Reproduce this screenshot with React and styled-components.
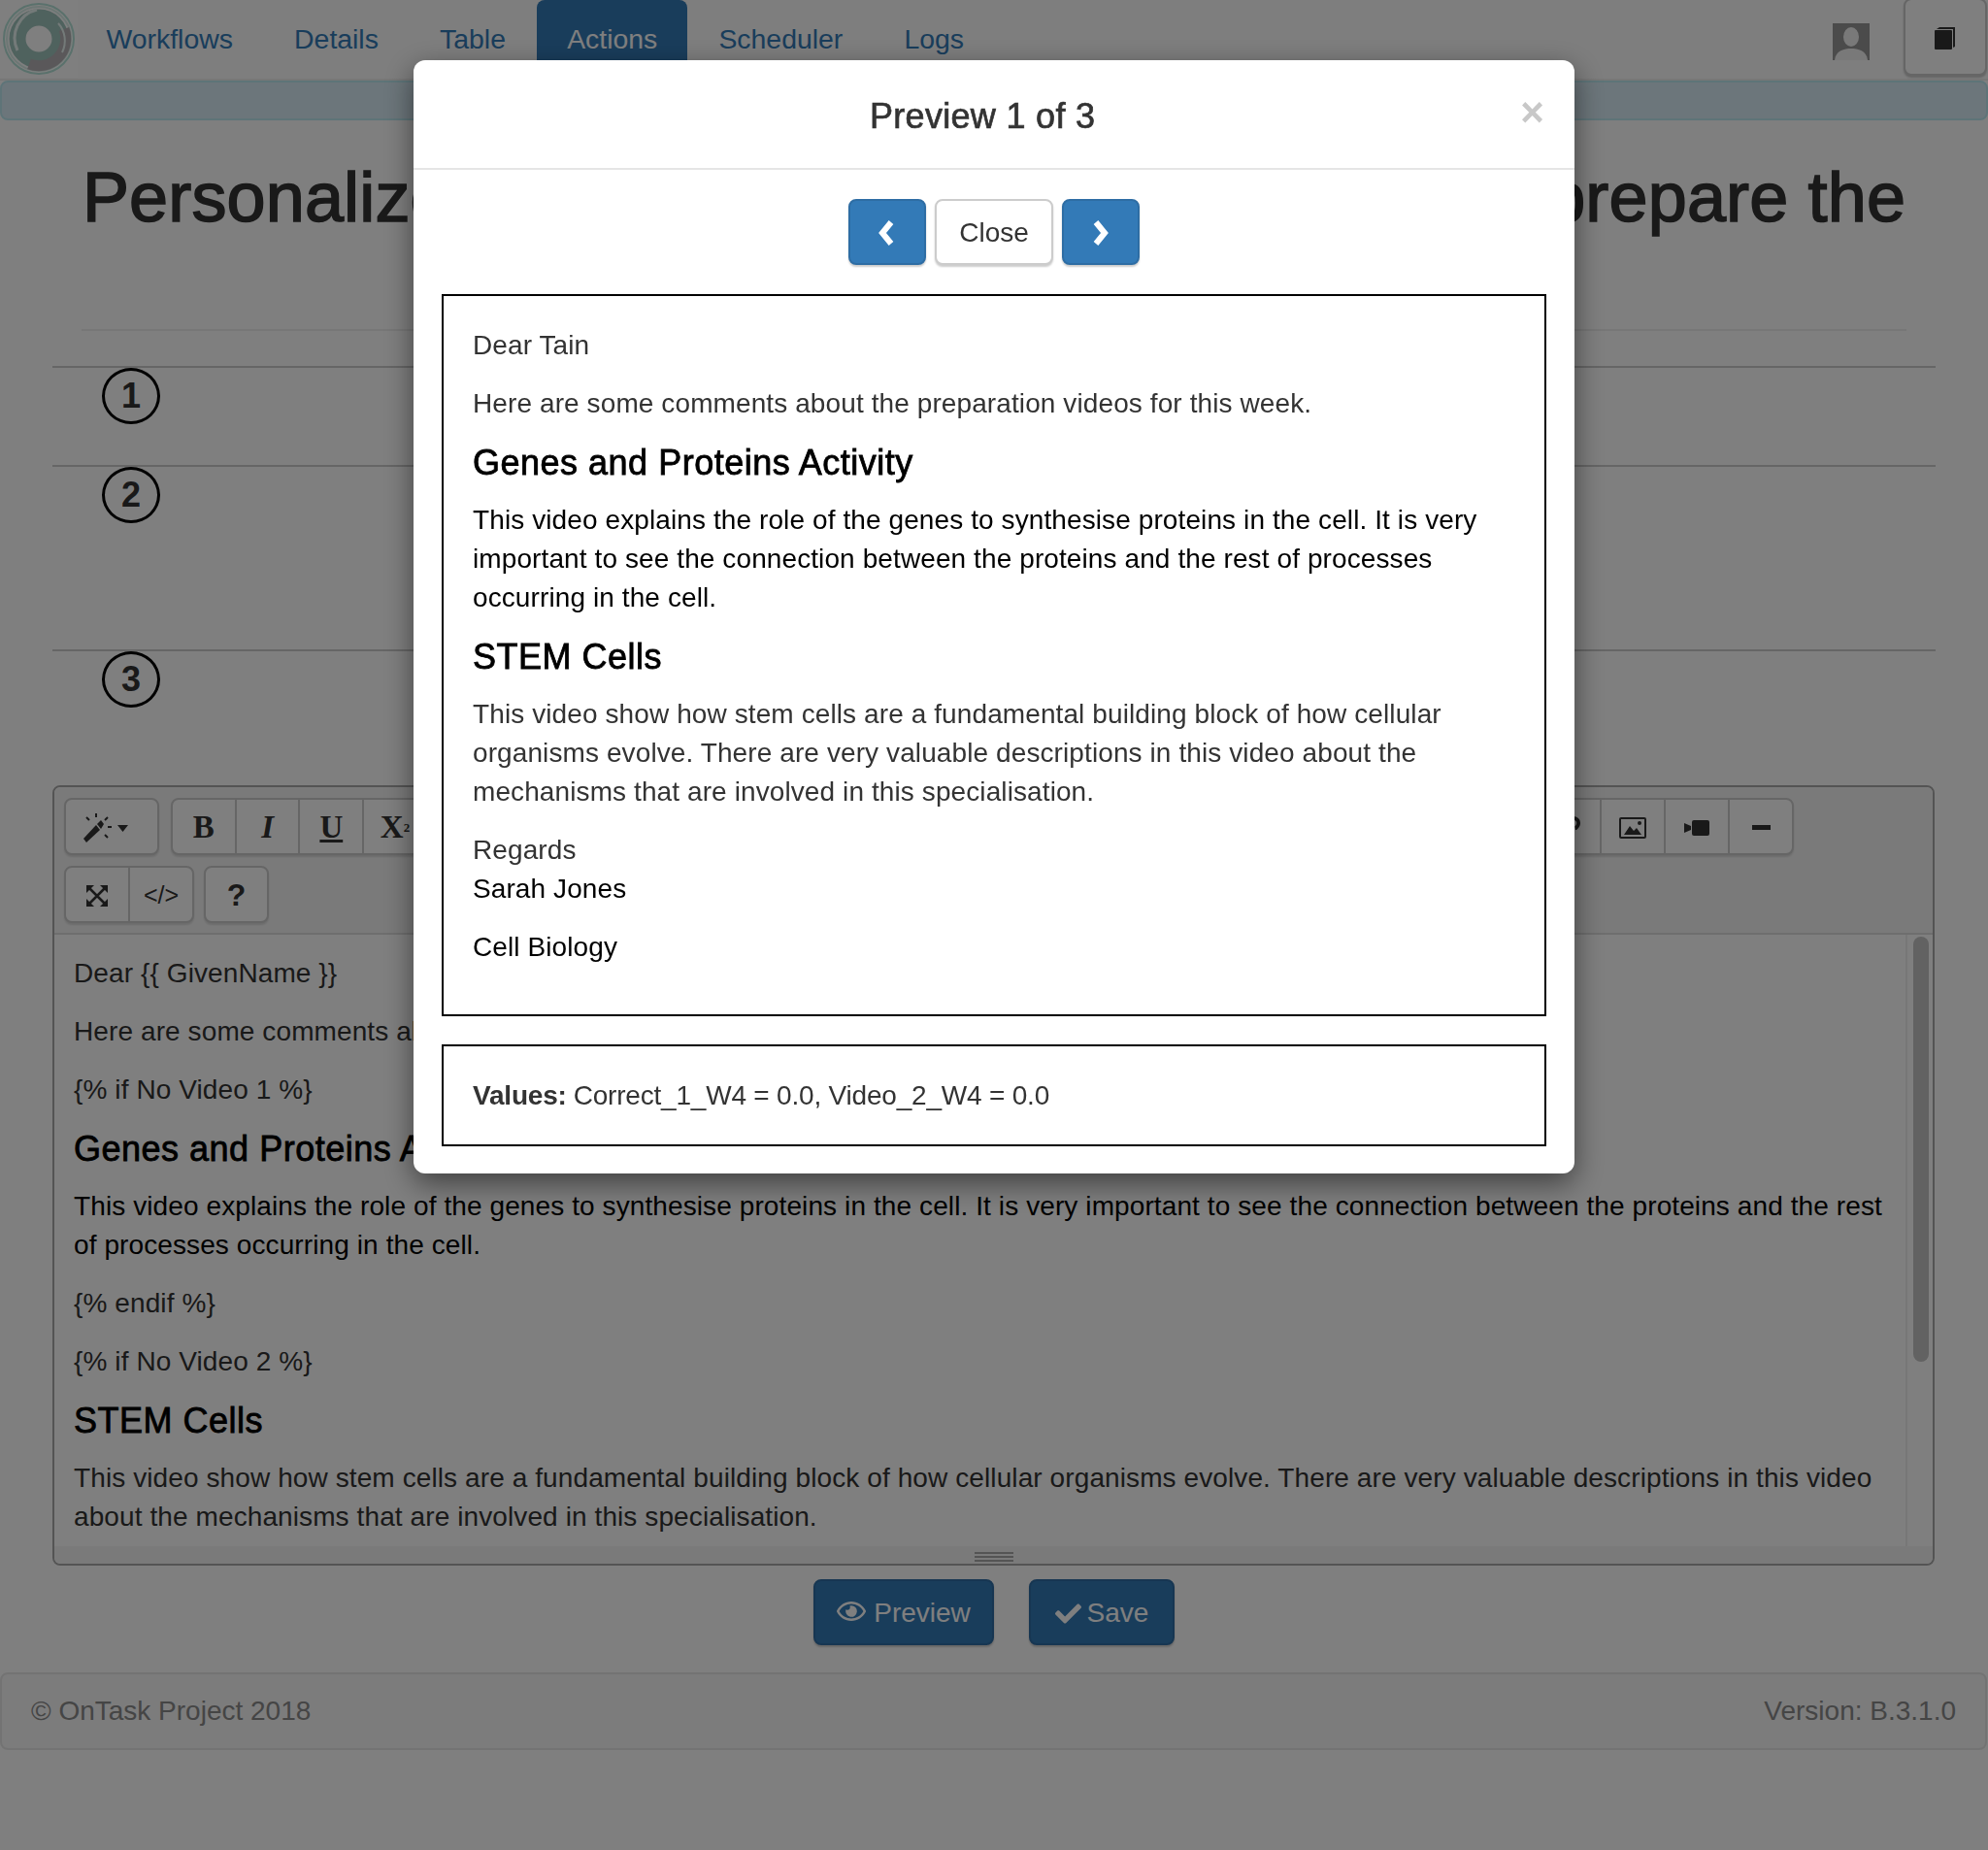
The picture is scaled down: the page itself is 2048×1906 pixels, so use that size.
import React from 'react'
import styled, { createGlobalStyle } from 'styled-components'
import { FaCheck, FaRegEye, FaLink } from 'react-icons/fa'

const GlobalStyle = createGlobalStyle`
  html, body {
    margin: 0;
    padding: 0;
    background: #fff;
    color: #333;
    font-family: "Liberation Sans", Arial, sans-serif;
    font-size: 28px;
    line-height: 40px;
    letter-spacing: 0.1px;
  }
  * {
    box-sizing: border-box;
  }
`

const NavBar = styled.nav`
  display: flex;
  align-items: flex-start;
  height: 83px;
  background: #fcfcfc;
  border-bottom: 2px solid #eee;
`

const LogoBox = styled.div`
  width: 80px;
  height: 80px;
  flex: none;
  background: #fff;
`

const NavLinks = styled.ul`
  display: flex;
  gap: 4.2px;
  flex: 1;
  margin: 0;
  padding: 0;
  list-style: none;
`

const NavLink = styled.li`
  height: 82px;
  margin: 0 ${(p) => (p.$active ? '-1.5px' : '0')};
  padding: 20px ${(p) => (p.$active ? '31px' : '29.5px')} 0;
  color: ${(p) => (p.$active ? '#fff' : '#337ab7')};
  background: ${(p) => (p.$active ? '#337ab7' : 'transparent')};
  border-radius: 8px 8px 0 0;
  font-size: 28.4px;
  letter-spacing: 0;
`

const Avatar = styled.svg`
  display: block;
  width: 38px;
  height: 38px;
  margin: 24px 35px 0 0;
  flex: none;
`

const BookButton = styled.button`
  display: flex;
  justify-content: center;
  width: 86px;
  height: 80px;
  margin: -2px 1px 0 0;
  padding: 27px 0 0;
  flex: none;
  background: #fff;
  border: 2px solid #ccc;
  border-radius: 8px;
  box-shadow: 0 2px 2px rgba(0, 0, 0, 0.2);
`

const InfoBar = styled.div`
  height: 41px;
  background: #d9edf7;
  border: 2px solid #bce8f1;
  border-radius: 8px;
`

const PageHeader = styled.header`
  margin: 40px 84px 36px;
  padding-bottom: 96px;
  border-bottom: 2px solid #eee;
`

const Title = styled.h1`
  margin: 0;
  color: #333;
  font-size: 72px;
  font-weight: 400;
  line-height: 79px;
  letter-spacing: 0.15px;
  text-align: center;
  white-space: nowrap;
  -webkit-text-stroke: 1.6px #333;
`

const Steps = styled.section`
  margin: 0 54px;
`

const Step = styled.div`
  height: ${(p) => p.$height}px;
  padding-left: 51px;
  border-top: 2px solid #ccc;
`

const StepNumber = styled.div`
  display: flex;
  align-items: center;
  justify-content: center;
  width: 60px;
  height: 58px;
  border: 3.5px solid #000;
  border-radius: 50%;
  font-size: 36px;
  font-weight: 700;
`

const Editor = styled.section`
  position: relative;
  margin: 0 55px 14px 54px;
  border: 2px solid #a9a9a9;
  border-radius: 8px;
  overflow: hidden;
`

const Toolbar = styled.div`
  display: flex;
  flex-direction: column;
  gap: 11px;
  padding: 11px 10px 10px;
  background: #f5f5f5;
  border-bottom: 2px solid #ddd;
`

const ToolRow = styled.div`
  display: flex;
  gap: ${(p) => p.$gap || 12}px;
`

const ToolGroup = styled.div`
  display: flex;
  width: ${(p) => p.$width || 66}px;
  height: 59px;
  background: #fff;
  border: 2px solid #ccc;
  border-radius: 8px;
  box-shadow: 0 2px 2px rgba(0, 0, 0, 0.12);
`

const ToolCell = styled.button`
  display: flex;
  flex: 1;
  align-items: center;
  justify-content: center;
  padding: 2px ${(p) => p.$inset || 0}px 0 0;
  color: #333;
  background: none;
  border: 0;
  border-right: 2px solid #ccc;
  font-family: ${(p) => (p.$serif ? '"Liberation Serif", serif' : '"Liberation Sans", Arial, sans-serif')};
  font-size: ${(p) => p.$size || 33}px;
  font-style: ${(p) => (p.$italic ? 'italic' : 'normal')};
  font-weight: ${(p) => (p.$bold ? 700 : 400)};
  text-decoration: ${(p) => (p.$underline ? 'underline' : 'none')};

  &:last-child {
    border-right: 0;
  }

  sup {
    font-size: 13px;
    line-height: 0;
  }
`

const EditArea = styled.div`
  position: relative;
  height: 630px;
  padding: 20px 49px 0 20px;
  overflow: hidden;
  color: #000;
`

const ScrollTrack = styled.div`
  position: absolute;
  top: 0;
  right: 0;
  bottom: 0;
  width: 28px;
  background: #fff;
  border-left: 2px solid #eee;
`

const ScrollThumb = styled.div`
  width: 16px;
  height: 438px;
  margin: 2px 0 0 6px;
  background: #c4c4c4;
  border-radius: 8px;
`

const Para = styled.p`
  margin: 0 0 20px;
  color: ${(p) => (p.$dark ? '#000' : '#333')};
`

const Signature = styled.span`
  color: #000;
`

const Heading = styled.h3`
  margin: 0 0 20px;
  padding-top: 2px;
  color: #000;
  font-size: 36px;
  font-weight: 400;
  line-height: 38px;
  letter-spacing: 0.5px;
  -webkit-text-stroke: 0.8px #000;
`

const StatusBar = styled.div`
  display: flex;
  justify-content: center;
  height: 18px;
  padding-top: 6px;
  background: #f5f5f5;
`

const Resizer = styled.div`
  width: 40px;
  height: 10px;
  border-top: 2px solid #a9a9a9;
  border-bottom: 2px solid #a9a9a9;
  background: linear-gradient(#a9a9a9, #a9a9a9) center / 100% 2px no-repeat;
`

const Actions = styled.div`
  display: flex;
  justify-content: center;
  gap: 36px;
  margin-bottom: 28px;
`

const Button = styled.button`
  display: flex;
  align-items: center;
  justify-content: center;
  gap: ${(p) => p.$gap || 8}px;
  width: ${(p) => p.$width}px;
  height: 68px;
  padding: 2px 0 0;
  color: ${(p) => (p.$primary ? '#fff' : '#333')};
  background: ${(p) => (p.$primary ? '#337ab7' : '#fff')};
  border: 2px solid ${(p) => (p.$primary ? '#2e6da4' : '#ccc')};
  border-radius: 8px;
  box-shadow: 0 2px 2px rgba(0, 0, 0, 0.2);
  font-family: inherit;
  font-size: 28px;
  letter-spacing: 0;
`

const EyeIcon = styled(FaRegEye)`
  margin-top: -4px;
`

const Footer = styled.footer`
  display: flex;
  align-items: center;
  justify-content: space-between;
  width: 2047px;
  height: 80px;
  padding: 0 30px;
  color: #8a8a8a;
  background: #f8f8f8;
  border: 2px solid #e7e7e7;
  border-radius: 8px;
  letter-spacing: 0;
`

const Backdrop = styled.div`
  position: fixed;
  inset: 0;
  padding-top: 62px;
  background: rgba(0, 0, 0, 0.5);
`

const Modal = styled.div`
  width: 1196px;
  margin: 0 auto;
  background: #fff;
  border-radius: 12px;
  box-shadow: 0 10px 30px rgba(0, 0, 0, 0.5);
`

const ModalHeader = styled.div`
  display: flex;
  align-items: center;
  height: 113px;
  padding: 0 31px 0 32px;
  border-bottom: 2px solid #e5e5e5;
`

const ModalTitle = styled.h4`
  flex: 1;
  margin: 0;
  padding-top: 3px;
  color: #333;
  font-size: 36px;
  font-weight: 400;
  line-height: 51px;
  letter-spacing: 0.3px;
  text-align: center;
  -webkit-text-stroke: 0.7px #333;
`

const CloseX = styled.span`
  margin-top: -4px;
  color: #c8c8c8;
  font-size: 42px;
  font-weight: 700;
  line-height: 40px;
`

const ModalBody = styled.div`
  padding: 30px 29px 28px;
`

const Pager = styled.div`
  display: flex;
  justify-content: center;
  gap: 9px;
  margin-bottom: 30px;
`

const OutlineBox = styled.div`
  padding: 31px 30px 29px;
  border: 2px solid #000;
`

const ValuesBox = styled(OutlineBox)`
  display: flex;
  align-items: center;
  height: 105px;
  margin-top: 29px;
  padding: 0 30px;
  letter-spacing: -0.2px;

  b {
    margin-right: 7px;
  }
`

const Chevron = ({ right }) => (
  <svg width="18" height="26" viewBox="0 0 18 26">
    <polyline
      points={right ? '4,2 13,13 4,24' : '13,2 4,13 13,24'}
      fill="none"
      stroke="#fff"
      strokeWidth="6"
    />
  </svg>
)

const Logo = () => (
  <svg width="80" height="80" viewBox="0 0 80 80">
    <circle cx="40" cy="40" r="36" fill="none" stroke="#b5e2d8" strokeWidth="2" />
    <circle cx="40" cy="40" r="33" fill="none" stroke="#d8efe9" strokeWidth="2" />
    <circle cx="40" cy="40" r="22" fill="none" stroke="#9fc4bc" strokeWidth="17" />
    <path d="M18 52 A30 30 0 0 1 38 10" fill="none" stroke="#e8f5f2" strokeWidth="3" />
    <path d="M30 66 A28 28 0 0 0 66 30" fill="none" stroke="#b4b0b4" strokeWidth="11" />
    <path d="M64 54 A27 27 0 0 0 60 24" fill="none" stroke="#e8f5f2" strokeWidth="2" />
  </svg>
)

const AvatarIcon = () => (
  <Avatar viewBox="0 0 38 38">
    <rect width="38" height="38" fill="#969696" />
    <ellipse cx="19" cy="14" rx="8" ry="10" fill="#f2f2f2" />
    <path d="M2 38 C3 28 12 26 19 26 C26 26 35 28 36 38 Z" fill="#f2f2f2" />
  </Avatar>
)

const BookIcon = () => (
  <svg width="24" height="24" viewBox="0 0 24 24">
    <path d="M3 3 L6 1 H22 V21 L20 22 V3 Z" fill="#333" />
    <rect x="1" y="4" width="18" height="20" rx="1" fill="#333" />
  </svg>
)

const WandIcon = () => (
  <svg width="47" height="30" viewBox="0 0 47 30">
    <path d="M1 26 L4 30 L18 17 L14 12 Z" fill="#333" />
    <path d="M15 11 L19 7 L22 11 L19 16 Z" fill="#333" />
    <path
      d="M14 0 V4 M4 4 L7 7 M26 4 L23 7 M26 14 H30 M23 22 L26 25"
      stroke="#333"
      strokeWidth="2"
      fill="none"
    />
    <path d="M36 12 H47 L41.5 19 Z" fill="#333" />
  </svg>
)

const ExpandIcon = () => (
  <svg width="22" height="22" viewBox="0 0 22 22">
    <path d="M3 3 L19 19 M19 3 L3 19" stroke="#333" strokeWidth="2.5" />
    <path d="M0 0 H8 L0 8 Z M22 0 V8 L14 0 Z M0 22 V14 L8 22 Z M22 22 H14 L22 14 Z" fill="#333" />
  </svg>
)

const PictureIcon = () => (
  <svg width="28" height="22" viewBox="0 0 28 22">
    <rect x="1" y="1" width="26" height="20" rx="1" fill="none" stroke="#333" strokeWidth="2" />
    <path d="M5 18 L11 9 L15 14 L18 11 L23 18 Z" fill="#333" />
    <circle cx="21" cy="6" r="2" fill="#333" />
  </svg>
)

const VideoIcon = () => (
  <svg width="26" height="16" viewBox="0 0 26 16">
    <path d="M0 3 L7 6 V10 L0 13 Z" fill="#333" />
    <rect x="8" y="0" width="18" height="16" rx="2" fill="#333" />
  </svg>
)

const RuleIcon = () => (
  <svg width="19" height="5" viewBox="0 0 19 5">
    <rect width="19" height="5" fill="#333" />
  </svg>
)

const Message = ({ preview }) => (
  <div>
    <Para>{preview ? 'Dear Tain' : 'Dear {{ GivenName }}'}</Para>
    <Para>Here are some comments about the preparation videos for this week.</Para>
    {!preview && <Para>{'{% if No Video 1 %}'}</Para>}
    <Heading>Genes and Proteins Activity</Heading>
    <Para $dark>
      This video explains the role of the genes to synthesise proteins in the cell. It is very
      important to see the connection between the proteins and the rest of processes occurring in
      the cell.
    </Para>
    {!preview && <Para>{'{% endif %}'}</Para>}
    {!preview && <Para>{'{% if No Video 2 %}'}</Para>}
    <Heading>STEM Cells</Heading>
    <Para>
      This video show how stem cells are a fundamental building block of how cellular organisms
      evolve. There are very valuable descriptions in this video about the mechanisms that are
      involved in this specialisation.
    </Para>
    {preview && (
      <>
        <Para>
          Regards
          <br />
          <Signature>Sarah Jones</Signature>
        </Para>
        <Para $dark>Cell Biology</Para>
      </>
    )}
  </div>
)

const App = () => (
  <>
    <GlobalStyle />
    <NavBar>
      <LogoBox>
        <Logo />
      </LogoBox>
      <NavLinks>
        <NavLink>Workflows</NavLink>
        <NavLink>Details</NavLink>
        <NavLink>Table</NavLink>
        <NavLink $active>Actions</NavLink>
        <NavLink>Scheduler</NavLink>
        <NavLink>Logs</NavLink>
      </NavLinks>
      <AvatarIcon />
      <BookButton>
        <BookIcon />
      </BookButton>
    </NavBar>
    <InfoBar />
    <PageHeader>
      <Title>Personalized text for all the students to quickly prepare the</Title>
    </PageHeader>
    <Steps>
      <Step $height={102}>
        <StepNumber>1</StepNumber>
      </Step>
      <Step $height={190}>
        <StepNumber>2</StepNumber>
      </Step>
      <Step $height={140}>
        <StepNumber>3</StepNumber>
      </Step>
    </Steps>
    <Editor>
      <Toolbar>
        <ToolRow>
          <ToolGroup $width={98}>
            <ToolCell $inset={13}>
              <WandIcon />
            </ToolCell>
          </ToolGroup>
          <ToolGroup $width={462}>
            <ToolCell $serif $bold>B</ToolCell>
            <ToolCell $serif $bold $italic>I</ToolCell>
            <ToolCell $serif $bold $underline>U</ToolCell>
            <ToolCell $serif $bold>
              X<sup>2</sup>
            </ToolCell>
            <ToolCell />
            <ToolCell />
            <ToolCell />
          </ToolGroup>
          <ToolGroup $width={250} />
          <ToolGroup $width={104} />
          <ToolGroup $width={100} />
          <ToolGroup $width={198} />
          <ToolGroup $width={100} />
          <ToolGroup $width={108} />
          <ToolGroup $width={266}>
            <ToolCell>
              <FaLink size={24} />
            </ToolCell>
            <ToolCell>
              <PictureIcon />
            </ToolCell>
            <ToolCell>
              <VideoIcon />
            </ToolCell>
            <ToolCell>
              <RuleIcon />
            </ToolCell>
          </ToolGroup>
        </ToolRow>
        <ToolRow $gap={10}>
          <ToolGroup $width={134}>
            <ToolCell>
              <ExpandIcon />
            </ToolCell>
            <ToolCell $size={25}>{'</>'}</ToolCell>
          </ToolGroup>
          <ToolGroup $width={67}>
            <ToolCell $bold $size={32}>?</ToolCell>
          </ToolGroup>
        </ToolRow>
      </Toolbar>
      <EditArea>
        <Message />
        <ScrollTrack>
          <ScrollThumb />
        </ScrollTrack>
      </EditArea>
      <StatusBar>
        <Resizer />
      </StatusBar>
    </Editor>
    <Actions>
      <Button $primary $width={186}>
        <EyeIcon size={30} />
        Preview
      </Button>
      <Button $primary $width={150} $gap={6}>
        <FaCheck size={27} />
        Save
      </Button>
    </Actions>
    <Footer>
      <span>© OnTask Project 2018</span>
      <span>Version: B.3.1.0</span>
    </Footer>
    <Backdrop>
      <Modal>
        <ModalHeader>
          <ModalTitle>Preview 1 of 3</ModalTitle>
          <CloseX>×</CloseX>
        </ModalHeader>
        <ModalBody>
          <Pager>
            <Button $primary $width={80}>
              <Chevron />
            </Button>
            <Button $width={122}>Close</Button>
            <Button $primary $width={80}>
              <Chevron right />
            </Button>
          </Pager>
          <OutlineBox>
            <Message preview />
          </OutlineBox>
          <ValuesBox>
            <b>Values:</b> Correct_1_W4 = 0.0, Video_2_W4 = 0.0
          </ValuesBox>
        </ModalBody>
      </Modal>
    </Backdrop>
  </>
)

export default App
